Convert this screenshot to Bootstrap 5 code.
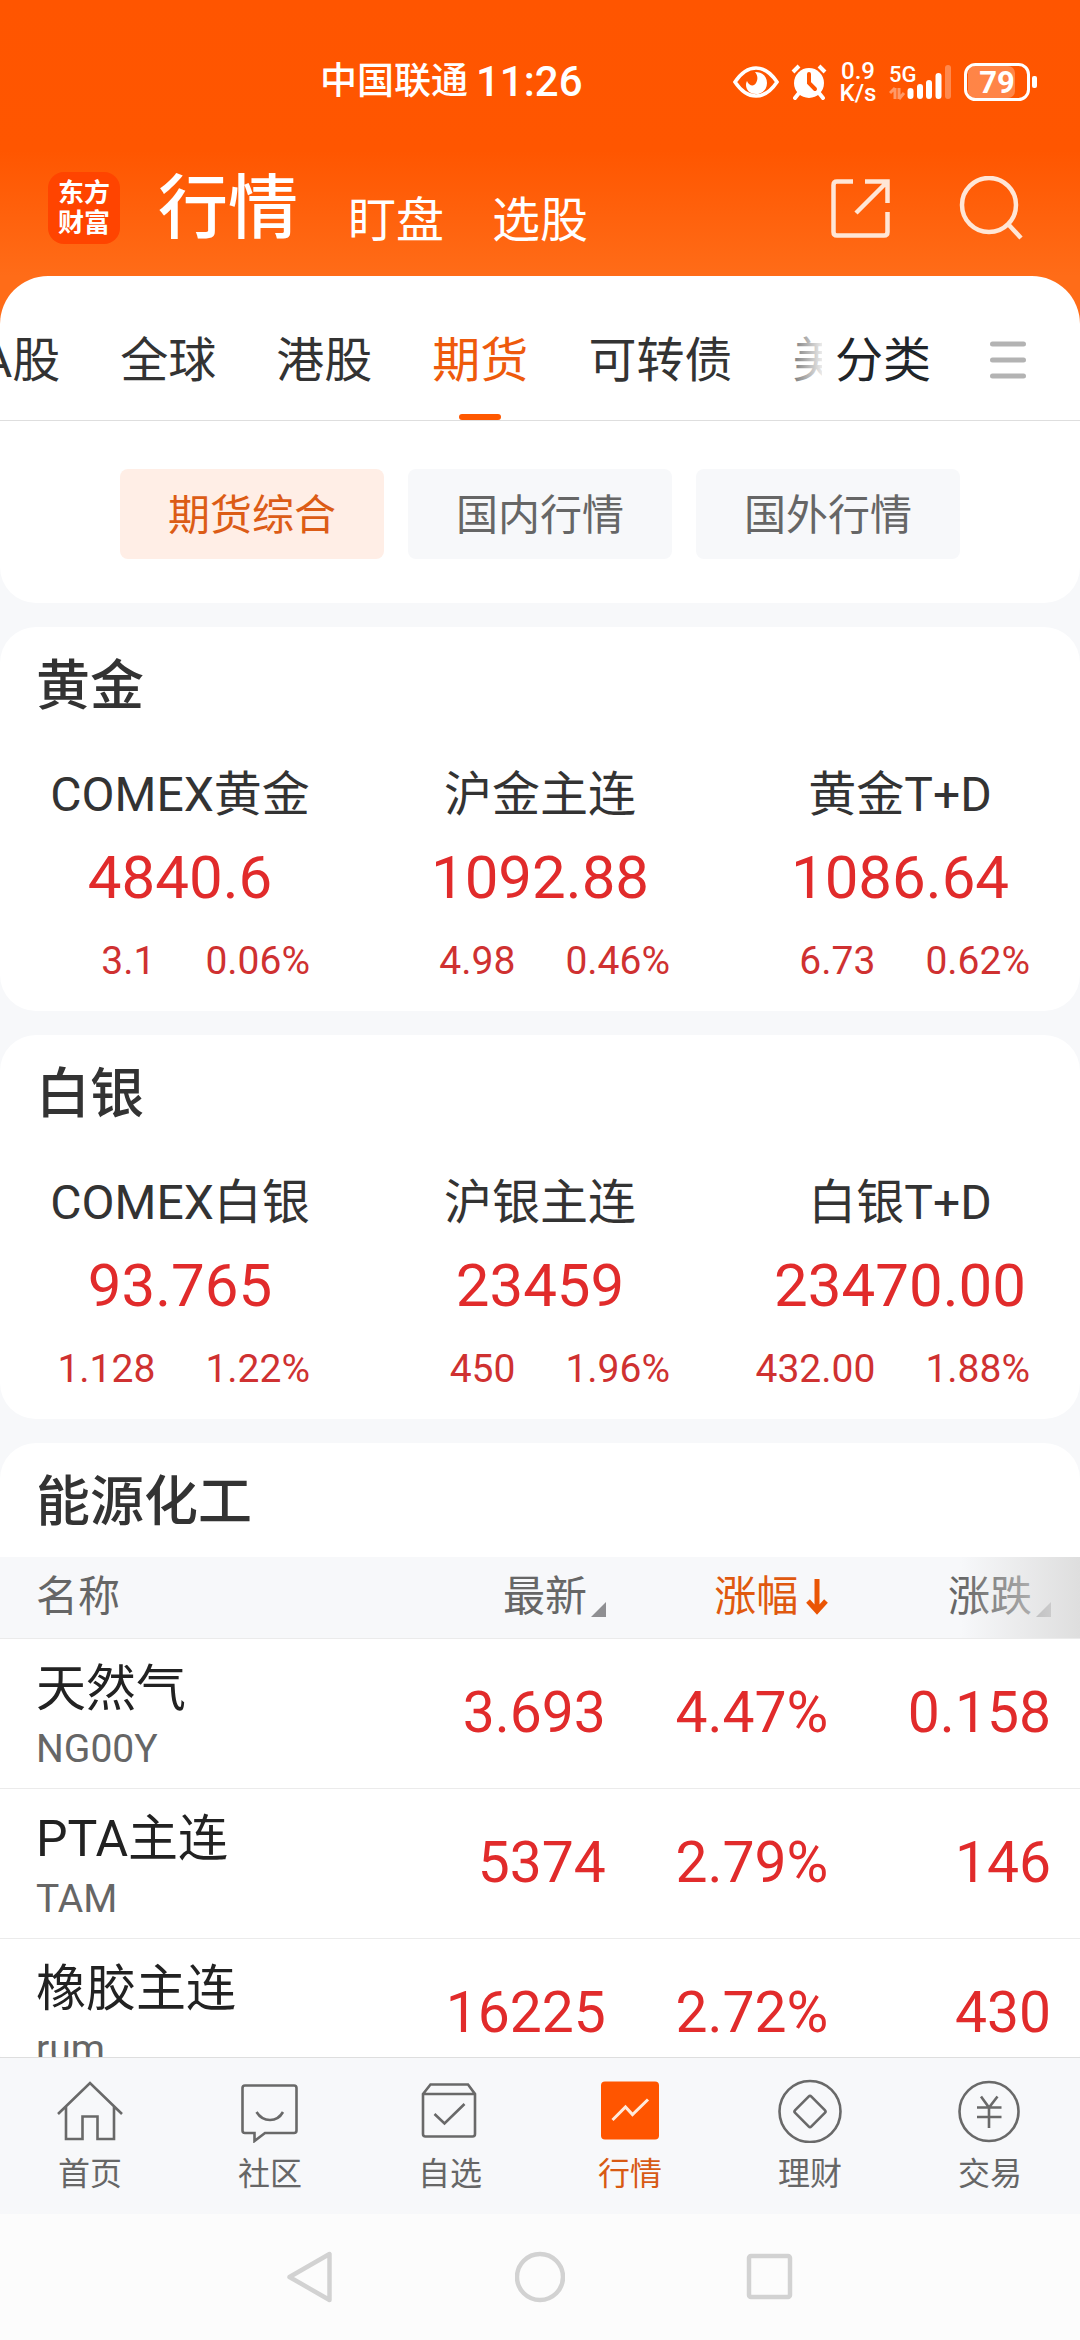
<!DOCTYPE html>
<html lang="zh-CN">
<head>
<meta charset="utf-8">
<meta name="viewport" content="width=device-width, initial-scale=1">
<title>行情 - 期货</title>
<link href="https://cdn.jsdelivr.net/npm/bootstrap@5.3.0/dist/css/bootstrap.min.css" rel="stylesheet">
<style>
:root{--brand:#ff5800;--brand-text:#e0590f;--ink:#333;--muted:#666;--up:#e12b2b;--page:#f7f8fa}
body{font-family:Roboto,"Noto Sans CJK SC",sans-serif;color:var(--ink);background:var(--page);line-height:1.2}
a{color:inherit;text-decoration:none}
svg{display:block;flex:none}
button{color:inherit}
.app-head{background:linear-gradient(#ff5500 0,#ff5600 150px,#ff6c18 276px);color:#fff;padding-bottom:48px}
.status-bar{height:160px;padding:4px 42px 0 320px}
.carrier{font-size:37px;font-weight:500}
.clock{font-size:42px;font-weight:500}
.status-icons{gap:12px}
.net-rate{font-size:24px;line-height:22px;font-weight:500;width:38px}
.title-bar{height:116px;padding:0 56px 0 48px}
.brand-logo{width:72px;height:72px;border-radius:16px;background:#ff4400;font-size:26px;line-height:30px;font-weight:700}
.head-links{height:72px;line-height:72px;gap:48px;padding:5px 0 0 38px}
.head-links a{font-size:48px;padding-top:12px}
.head-links .now{font-size:70px;font-weight:500;padding:0 2px 0 0}
.panel{background:#fff;border-radius:36px}
.panel-top{border-radius:48px 48px 36px 36px}
.tab-row{height:145px;border-bottom:1px solid #dedede}
.tab-strip{flex:0 1 822px;overflow:hidden;position:relative}
.tab-strip::after{content:"";position:absolute;right:0;top:0;bottom:0;width:32px;background:linear-gradient(90deg,rgba(255,255,255,.3),rgba(255,255,255,.9))}
.tab-list{gap:60px;margin-left:-19px;font-size:48px;height:144px;white-space:nowrap}
.tab-list a{position:relative;padding-top:26px;line-height:118px}
.tab-list .now{color:#ee5a0c}
.tab-list .now::after{content:"";position:absolute;left:27px;right:27px;bottom:0;height:6px;border-radius:3px;background:var(--brand)}
.classify{font-size:48px;line-height:118px;padding:26px 0 0 13px}
.menu-btn{padding:30px 54px 6px 0}
.chips{padding:48px 120px 44px;gap:24px}
.chip{background:var(--page);color:var(--muted);font-size:42px;height:90px;border-radius:8px;padding:2px 0 0}
.chip.now{background:#ffeee6;color:#dc5c16}
.feed{flex:1 1 0;min-height:0;overflow:hidden;margin-top:-48px}
.stack{gap:24px}
.sec-title{font-size:54px;line-height:64px;font-weight:500;padding:28px 36px 0;margin:0}
.quotes{padding:44px 0 24px}
.q-name{font-size:48px;line-height:64px}
.q-price{font-size:60px;line-height:72px;color:var(--up);padding-top:15px}
.q-sub{font-size:39px;line-height:48px;color:#cf3131;gap:50px;padding:23px 50px 0 0}
.quote-card{height:384px}
.energy .sec-title{padding-bottom:22px}
.rates{table-layout:fixed;width:100%}
.rates th{font-size:42px;line-height:48px;height:81px;font-weight:400;color:var(--muted)}
.rates thead{background:var(--page);position:relative}
.head-fade{position:absolute;right:0;top:0;bottom:0;width:120px;background:linear-gradient(90deg,rgba(224,224,224,0),rgba(222,222,222,1))}
.rates tbody tr{border-top:1px solid #ebebeb;height:150px}
.rates td,.rates th{padding:0;vertical-align:middle}
.rates td{font-size:57px;color:var(--up)}
.rates .item{padding-left:36px}
.rates td.item{padding-top:8px}
.rates .last{padding-right:29px}
.item-name{font-size:50px;line-height:64px;color:#222}
.item-code{font-size:39px;line-height:56px;color:var(--muted)}
.tri{color:#8f8f92}
.bottom-nav{height:157px;background:var(--page);border-top:1px solid #dedede;font-size:32px;line-height:40px;color:var(--muted);padding-top:21px}
.bottom-nav a{flex:1 1 0}
.bottom-nav svg{width:72px;height:64px;fill:none;stroke:#696969;stroke-width:2.6;margin-bottom:11px}
.bottom-nav .now{color:#d85a14}
.sys-nav{height:126px;background:#fcfcfc;gap:180px}
.sys-nav svg{fill:none;stroke:#d2d2d2;stroke-width:4.5}
</style>
</head>
<body class="d-flex flex-column vh-100 overflow-hidden">
<header class="app-head">
  <div class="status-bar d-flex align-items-center">
    <div class="d-flex align-items-center gap-2 me-auto">
      <span class="carrier">中国联通</span><span class="clock">11:26</span>
    </div>
    <div class="status-icons d-flex align-items-center">
      <svg width="46" height="34" viewBox="0 0 46 34"><path d="M2 17C8 8 15 3 23 3s15 5 21 14c-6 9-13 14-21 14S8 26 2 17Z" fill="none" stroke="#fff" stroke-width="3.6"/><path d="M22 7c7 0 12 4 12 11s-5 11-11 11-10-4-10-9c0-2 .5-3 1-4 2 5 7 6 9 2 2-4 2-7-1-11Z" fill="#fff"/></svg>
      <svg width="36" height="36" viewBox="0 0 36 36"><circle cx="18" cy="19" r="15" fill="#fff"/><path d="M2 8l6-6M34 8l-6-6" stroke="#fff" stroke-width="4"/><path d="M8 29l-4 5M28 29l4 5" stroke="#fff" stroke-width="4" stroke-linecap="round"/><path d="M18 10v9l6 6" fill="none" stroke="#ff5500" stroke-width="4" stroke-linecap="round"/></svg>
      <div class="net-rate text-center">0.9<br>K/s</div>
      <svg width="63" height="38" viewBox="0 0 63 38"><text x="0" y="19" font-size="22" font-weight="500" fill="#fff" font-family="Roboto,sans-serif">5G</text><g stroke="#fff" stroke-width="6" stroke-linecap="round"><path d="M21.500 28v5M31 24v9M40 20v13M49.500 13v20"/><path d="M59 5v28" opacity=".3"/></g><path d="M6 25v11M6 25l-5 5M10 25v11M10 36l5-6" stroke="#fff" stroke-width="3" opacity=".4" fill="none"/></svg>
      <svg width="74" height="38" viewBox="0 0 74 38"><rect x="4" y="3" width="47" height="32" rx="7" fill="#fff" opacity=".28"/><rect x="1.500" y="1.500" width="63" height="35" rx="10" fill="none" stroke="#fff" stroke-width="3"/><rect x="68" y="13" width="5" height="12" rx="2" fill="#fff"/><text x="33" y="30" font-size="31" font-weight="700" text-anchor="middle" fill="#fff" font-family="Roboto,sans-serif">79</text></svg>
    </div>
  </div>
  <div class="title-bar d-flex align-items-start pt-2">
    <a href="#" class="brand-logo d-flex flex-column align-items-center justify-content-center mt-1"><span>东方</span><span>财富</span></a>
    <nav class="head-links d-flex me-auto">
      <a class="now" href="#">行情</a><a href="#">盯盘</a><a href="#">选股</a>
    </nav>
    <div class="d-flex mt-2">
      <button class="btn p-0 border-0 me-5" type="button" aria-label="分享"><svg class="me-3" width="66" height="66" viewBox="0 0 66 66" fill="none" stroke="#ffe6d6" stroke-width="4.500"><path d="M25 5.500H9q-3.500 0-3.500 3.500V56q0 3.500 3.500 3.500H56q3.500 0 3.500-3.500V36M37 5.500H59.500V27M59 6 28 37"/></svg></button>
      <button class="btn p-0 border-0" type="button" aria-label="搜索"><svg width="66" height="66" viewBox="0 0 66 66" fill="none" stroke="#ffe6d6" stroke-width="4.500"><circle cx="31" cy="29" r="27"/><path d="M50 48 63 62"/></svg></button>
    </div>
  </div>
</header>

<main class="feed">
  <div class="stack d-flex flex-column">
    <section class="panel panel-top">
      <div class="tab-row d-flex">
        <div class="tab-strip">
          <nav class="tab-list d-flex">
            <a href="#">A股</a><a href="#">全球</a><a href="#">港股</a><a class="now" href="#">期货</a><a href="#">可转债</a><a href="#">美</a>
          </nav>
        </div>
        <button class="btn border-0 rounded-0 classify" type="button">分类</button>
        <button class="btn border-0 menu-btn ms-auto" type="button" aria-label="菜单"><svg width="36" height="38" viewBox="0 0 36 38" stroke="#b3b3b3" stroke-width="5" stroke-linecap="round"><path d="M2.500 3h31M2.500 19h31M2.500 35h31"/></svg></button>
      </div>
      <div class="chips d-flex">
        <button type="button" class="btn border-0 chip now flex-fill">期货综合</button>
        <button type="button" class="btn border-0 chip flex-fill">国内行情</button>
        <button type="button" class="btn border-0 chip flex-fill">国外行情</button>
      </div>
    </section>

    <section class="panel quote-card">
      <h2 class="sec-title">黄金</h2>
      <div class="quotes row g-0 text-center">
        <div class="col-4"><div class="q-name">COMEX黄金</div><div class="q-price">4840.6</div><div class="q-sub d-flex justify-content-end"><span>3.1</span><span>0.06%</span></div></div>
        <div class="col-4"><div class="q-name">沪金主连</div><div class="q-price">1092.88</div><div class="q-sub d-flex justify-content-end"><span>4.98</span><span>0.46%</span></div></div>
        <div class="col-4"><div class="q-name">黄金T+D</div><div class="q-price">1086.64</div><div class="q-sub d-flex justify-content-end"><span>6.73</span><span>0.62%</span></div></div>
      </div>
    </section>

    <section class="panel quote-card">
      <h2 class="sec-title">白银</h2>
      <div class="quotes row g-0 text-center">
        <div class="col-4"><div class="q-name">COMEX白银</div><div class="q-price">93.765</div><div class="q-sub d-flex justify-content-end"><span>1.128</span><span>1.22%</span></div></div>
        <div class="col-4"><div class="q-name">沪银主连</div><div class="q-price">23459</div><div class="q-sub d-flex justify-content-end"><span>450</span><span>1.96%</span></div></div>
        <div class="col-4"><div class="q-name">白银T+D</div><div class="q-price">23470.00</div><div class="q-sub d-flex justify-content-end"><span>432.00</span><span>1.88%</span></div></div>
      </div>
    </section>

    <section class="panel energy">
      <h2 class="sec-title">能源化工</h2>
      <table class="rates">
        <colgroup><col><col style="width:23.700%"><col style="width:20.600%"><col style="width:23.300%"></colgroup>
        <thead>
          <tr>
            <th class="item" scope="col">名称</th>
            <th scope="col"><div class="d-flex justify-content-end align-items-center">最新<svg class="tri ms-1 mt-4" width="15" height="15" viewBox="0 0 15 15"><path d="M15 0v15H0z" fill="currentColor"/></svg></div></th>
            <th scope="col"><div class="d-flex justify-content-end align-items-center" style="color:var(--brand-text)">涨幅<svg class="ms-2" width="22" height="36" viewBox="0 0 22 36" fill="none" stroke="#ea5504" stroke-width="5"><path d="M11 0v32M2 22l9 10 9-10"/></svg></div></th>
            <th class="last" scope="col"><div class="d-flex justify-content-end align-items-center">涨跌<svg class="tri ms-1 mt-4" width="15" height="15" viewBox="0 0 15 15"><path d="M15 0v15H0z" fill="currentColor"/></svg></div><div class="head-fade"></div></th>
          </tr>
        </thead>
        <tbody>
          <tr><td class="item"><div class="item-name">天然气</div><div class="item-code">NG00Y</div></td><td class="text-end">3.693</td><td class="text-end">4.47%</td><td class="text-end last">0.158</td></tr>
          <tr><td class="item"><div class="item-name">PTA主连</div><div class="item-code">TAM</div></td><td class="text-end">5374</td><td class="text-end">2.79%</td><td class="text-end last">146</td></tr>
          <tr><td class="item"><div class="item-name">橡胶主连</div><div class="item-code">rum</div></td><td class="text-end">16225</td><td class="text-end">2.72%</td><td class="text-end last">430</td></tr>
        </tbody>
      </table>
    </section>
  </div>
</main>

<nav class="bottom-nav d-flex text-center">
  <a href="#" class="d-flex flex-column align-items-center"><svg viewBox="0 0 72 64"><path d="M4 35 36 4 68 35M12 28V60H28.500V37.500H43.500V60H60V28"/></svg>首页</a>
  <a href="#" class="d-flex flex-column align-items-center"><svg viewBox="0 0 72 64"><path d="M11 6.500H60q2.500 0 2.500 2.500V51.500q0 2.500-2.500 2.500H31L20.500 62V54H11q-2.500 0-2.500-2.500V9q0-2.500 2.500-2.500ZM22.500 33q5 8 13.500 8t13-8"/></svg>社区</a>
  <a href="#" class="d-flex flex-column align-items-center"><svg viewBox="0 0 72 64"><path d="M9 15 16.500 5.500H54L61 15V55q0 2.500-2.500 2.500H11.500Q9 57.500 9 55ZM9 15H61M20.500 35l10 9.500L50.500 25"/></svg>自选</a>
  <a href="#" class="now d-flex flex-column align-items-center"><svg viewBox="0 0 72 64"><rect x="7" y="2.500" width="58" height="58" rx="4" fill="#ff5500" stroke="none"/><path d="M18.500 41 31.500 28l7 7.500L54 20.500" stroke="#ffeadb" stroke-width="3"/></svg>行情</a>
  <a href="#" class="d-flex flex-column align-items-center"><svg viewBox="0 0 72 64"><circle cx="36" cy="32.500" r="30.500"/><rect x="24.500" y="21" width="23" height="23" rx="2" transform="rotate(45 36 32.500)"/></svg>理财</a>
  <a href="#" class="d-flex flex-column align-items-center"><svg viewBox="0 0 72 64"><circle cx="35" cy="32.500" r="29.500"/><path d="M27 17.500 35 28.500l8.500-11M23 28.500H47.500M23 38H47.500M35 28.500V49"/></svg>交易</a>
</nav>
<div class="sys-nav d-flex justify-content-center align-items-center">
  <button class="btn p-0 border-0" type="button" aria-label="返回"><svg width="50" height="52" viewBox="0 0 50 52" stroke-linejoin="round"><path d="M44.500 3V49L4.500 26Z"/></svg></button>
  <button class="btn p-0 border-0" type="button" aria-label="主页"><svg width="50" height="52" viewBox="0 0 50 52"><circle cx="25" cy="26" r="23"/></svg></button>
  <button class="btn p-0 border-0" type="button" aria-label="最近任务"><svg width="50" height="52" viewBox="0 0 50 52"><rect x="4" y="5" width="41" height="41" rx="2"/></svg></button>
</div>
<script src="https://cdn.jsdelivr.net/npm/bootstrap@5.3.0/dist/js/bootstrap.bundle.min.js"></script>
</body>
</html>
